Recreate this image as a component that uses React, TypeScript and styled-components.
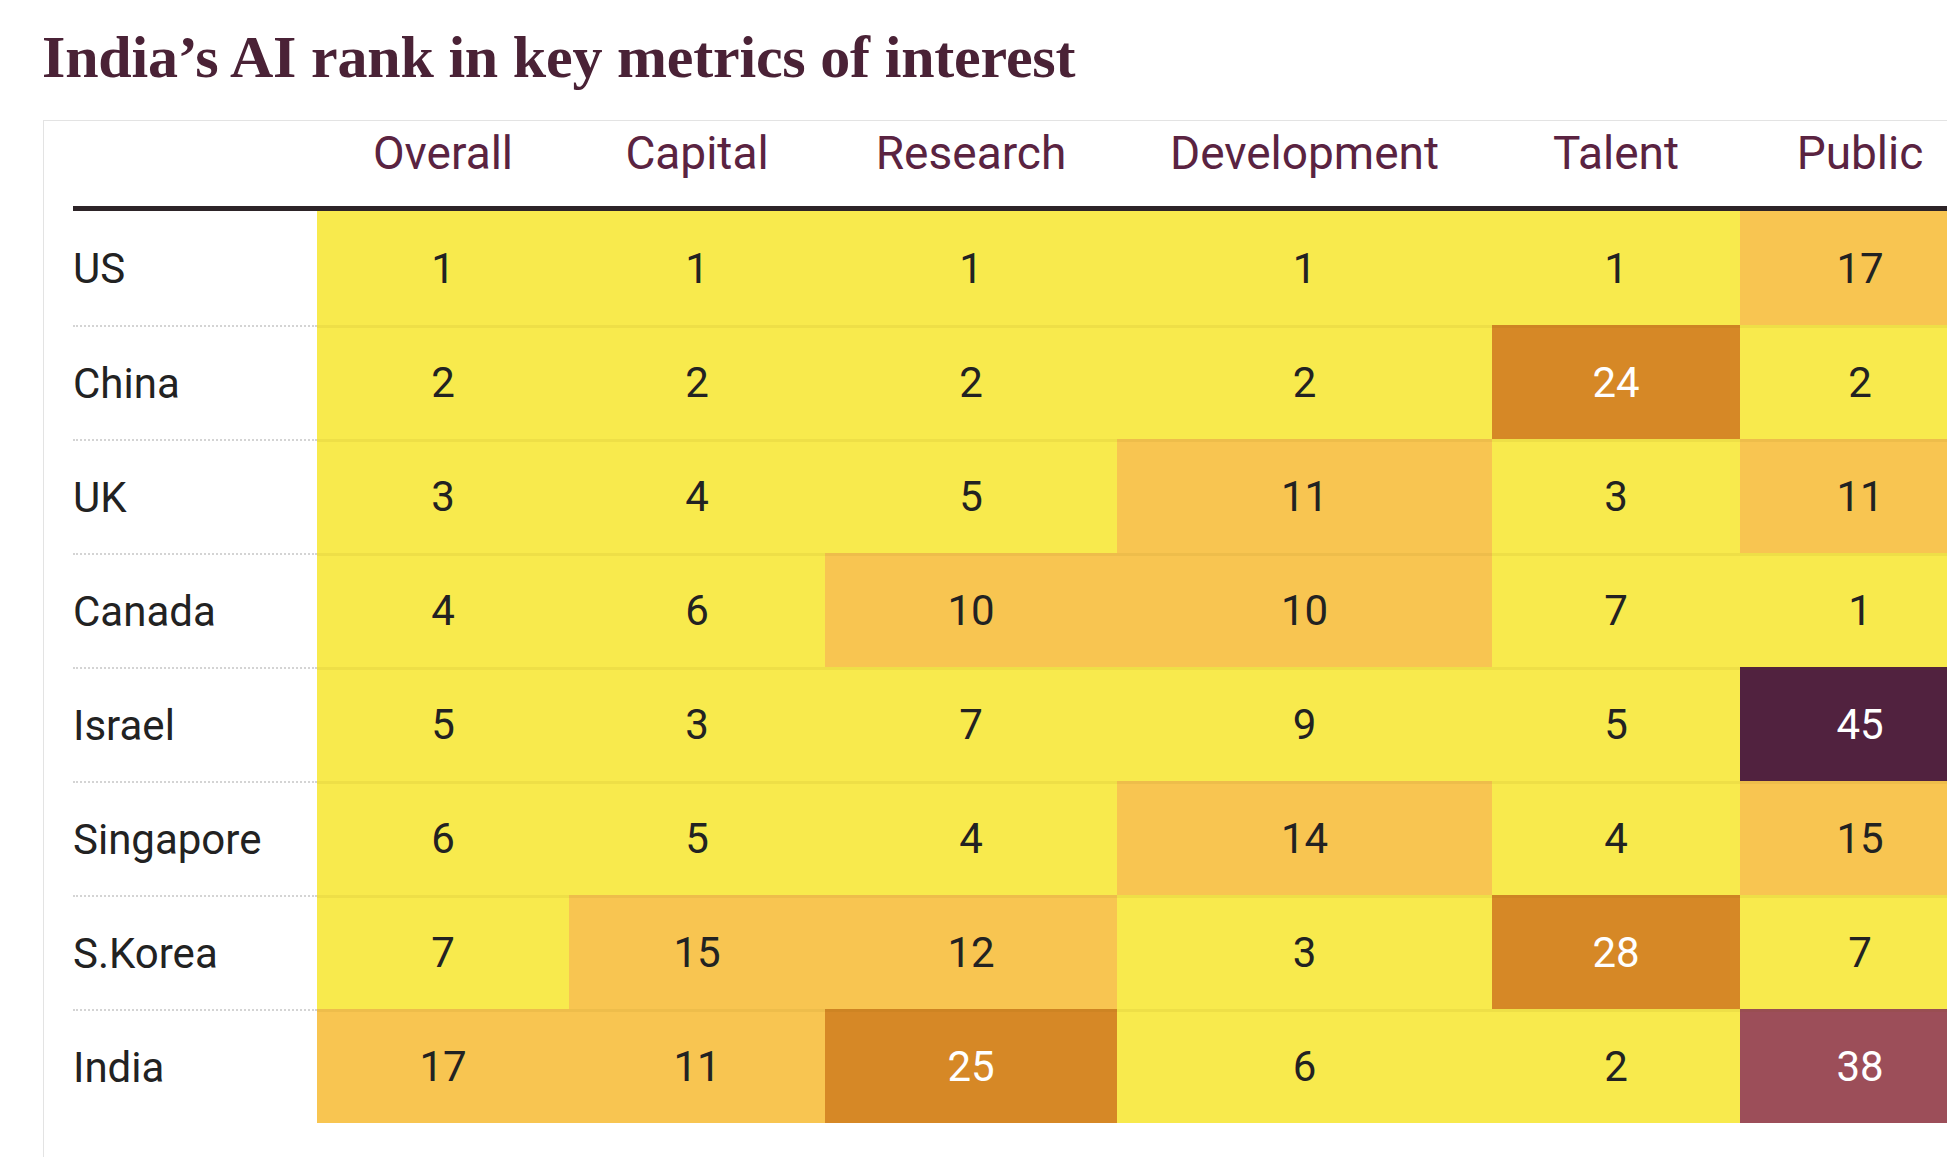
import React from 'react';
import styled, { createGlobalStyle } from 'styled-components';

type Tone = 'yellow' | 'amber' | 'orange' | 'plum' | 'rose';

const tones: Record<Tone, { bg: string; fg: string }> = {
  yellow: { bg: '#f8ea4d', fg: '#222222' },
  amber: { bg: '#f8c551', fg: '#222222' },
  orange: { bg: '#d68826', fg: '#ffffff' },
  plum: { bg: '#51223f', fg: '#ffffff' },
  rose: { bg: '#9c4e59', fg: '#ffffff' },
};

// rank -> colour band
const toneFor = (rank: number): Tone => {
  if (rank >= 40) return 'plum';
  if (rank >= 30) return 'rose';
  if (rank >= 20) return 'orange';
  if (rank >= 10) return 'amber';
  return 'yellow';
};

const columns = ['Overall', 'Capital', 'Research', 'Development', 'Talent', 'Public'];

const rows: { country: string; ranks: number[] }[] = [
  { country: 'US', ranks: [1, 1, 1, 1, 1, 17] },
  { country: 'China', ranks: [2, 2, 2, 2, 24, 2] },
  { country: 'UK', ranks: [3, 4, 5, 11, 3, 11] },
  { country: 'Canada', ranks: [4, 6, 10, 10, 7, 1] },
  { country: 'Israel', ranks: [5, 3, 7, 9, 5, 45] },
  { country: 'Singapore', ranks: [6, 5, 4, 14, 4, 15] },
  { country: 'S.Korea', ranks: [7, 15, 12, 3, 28, 7] },
  { country: 'India', ranks: [17, 11, 25, 6, 2, 38] },
];

const GRID = '244px 252px 256px 292px 375px 248px 240px';

const App: React.FC = () => {
  return (
    <>
      <GlobalStyle />
      <Page>
        <Title>India’s AI rank in key metrics of interest</Title>
        <Frame>
          <HeaderRow>
            <span />
            {columns.map((c) => (
              <HeaderCell key={c}>{c}</HeaderCell>
            ))}
          </HeaderRow>
          {rows.map((r, i) => (
            <Row key={r.country}>
              <Country first={i === 0}>{r.country}</Country>
              {r.ranks.map((rank, j) => (
                <Cell key={j} tone={toneFor(rank)} first={i === 0}>
                  {rank}
                </Cell>
              ))}
            </Row>
          ))}
        </Frame>
      </Page>
    </>
  );
};

const GlobalStyle = createGlobalStyle`
  html, body {
    margin: 0;
    padding: 0;
    background: #ffffff;
    overflow: hidden;
  }
  body {
    font-family: Roboto, 'Liberation Sans', sans-serif;
  }
`;

const Page = styled.div`
  padding: 27px 0 0 0;
  width: max-content;
`;

const Title = styled.h1`
  margin: 0 0 33px 42px;
  font-family: 'Liberation Serif', 'DejaVu Serif', serif;
  font-weight: 700;
  font-size: 60px;
  line-height: 60px;
  color: #4a2236;
  letter-spacing: -0.2px;
`;

const Frame = styled.div`
  margin-left: 43px;
  border-top: 1px solid #e3e3e3;
  border-left: 1px solid #e3e3e3;
  padding: 0 0 34px 29px;
`;

const HeaderRow = styled.div`
  display: grid;
  grid-template-columns: ${GRID};
  height: 90px;
  box-sizing: border-box;
  padding-top: 9px;
  border-bottom: 5px solid #2d2428;
`;

const HeaderCell = styled.div`
  text-align: center;
  font-family: Roboto, 'Liberation Sans', sans-serif;
  font-size: 46px;
  line-height: 46px;
  color: #5a2341;
`;

const Row = styled.div`
  display: grid;
  grid-template-columns: ${GRID};
  height: 114px;
`;

const Country = styled.div<{ first: boolean }>`
  display: flex;
  align-items: center;
  font-size: 42px;
  color: #222222;
  box-sizing: border-box;
  border-top: ${({ first }) => (first ? 'none' : '2px dotted #d4d4d4')};
`;

const Cell = styled.div<{ tone: Tone; first: boolean }>`
  display: flex;
  align-items: center;
  justify-content: center;
  font-size: 42px;
  background: ${({ tone }) => tones[tone].bg};
  color: ${({ tone }) => tones[tone].fg};
  box-shadow: ${({ first }) => (first ? 'none' : 'inset 0 3px 0 rgba(120, 90, 0, 0.07)')};
`;

export default App;
